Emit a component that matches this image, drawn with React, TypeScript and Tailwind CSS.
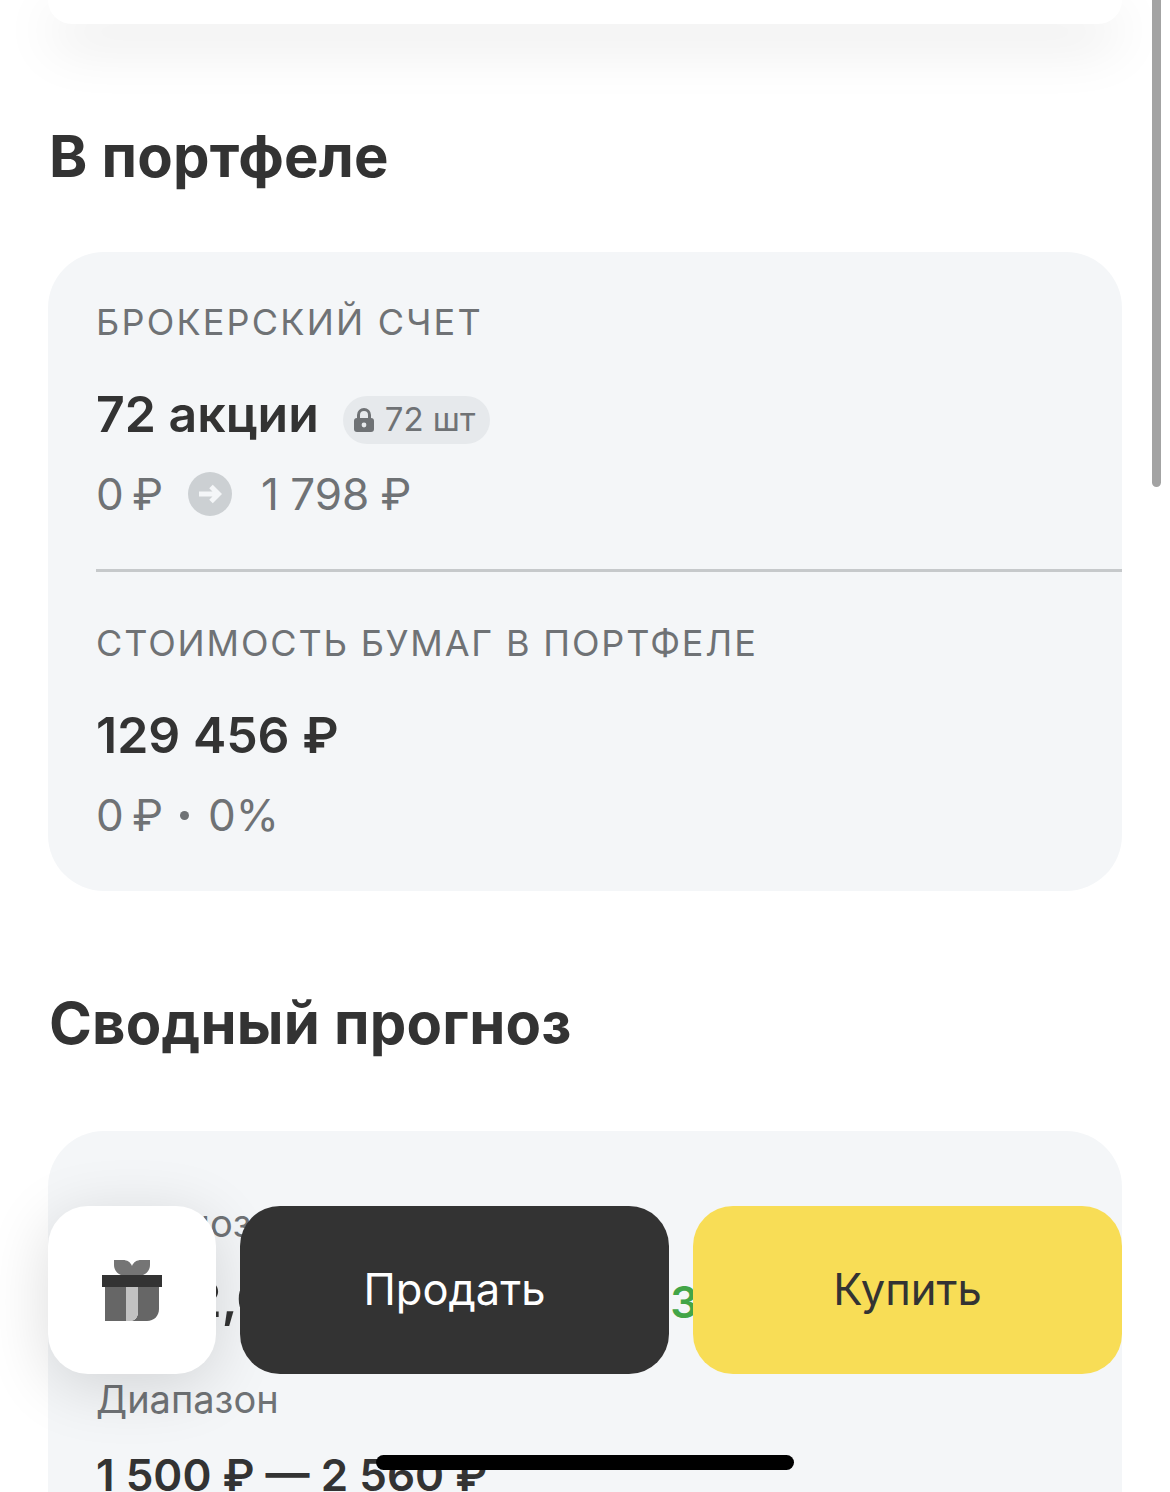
import React from "react";

function Gift() {
  return (
    <svg width="60" height="61" viewBox="0 0 60 61">
      <path d="M12 0H21C25 0 28.5 2 30 6C31.5 2 35 0 39 0H48V5C48 11 43 16 36 16H24C17 16 12 11 12 5Z" fill="#757575" />
      <rect x="0" y="15" width="60" height="12" fill="#333333" />
      <rect x="3" y="27" width="21" height="34" fill="#666666" />
      <path d="M36 27H57V49C57 56 52 61 45 61H28C33 61 36 57 36 52Z" fill="#666666" />
      <path d="M24 27H36V52C36 57 33 61 28 61H24Z" fill="#c2c2c2" />
    </svg>
  );
}

function Lock() {
  return (
    <svg width="22" height="25" viewBox="0 0 22 25">
      <path d="M5.5 10V7a5.5 5.5 0 0 1 11 0v3" fill="none" stroke="#6f7275" strokeWidth="3" />
      <rect x="1" y="10" width="20" height="14" rx="3" fill="#6f7275" />
      <circle cx="11" cy="17" r="2.4" fill="#e6e9ec" />
    </svg>
  );
}

function ArrowBadge() {
  return (
    <span className="flex h-[44px] w-[44px] items-center justify-center rounded-full bg-[#ccd0d3]">
      <svg width="24" height="22" viewBox="0 0 24 22">
        <path d="M1 11H20M13 3.5L20.5 11L13 18.5" fill="none" stroke="#f4f6f8" strokeWidth="5" />
      </svg>
    </span>
  );
}

export default function App() {
  return (
    <div
      className="relative h-[1492px] w-[1170px] overflow-hidden bg-white text-[#333333]"
      style={{ fontFamily: "Inter, 'Liberation Sans', sans-serif" }}
    >
      <div className="absolute right-[9px] top-0 h-[487px] w-[9px] rounded-b-full bg-[#a3a3a3]" />

      <div className="px-12">
        <div className="h-6 rounded-b-[24px] bg-white shadow-[0_20px_56px_rgba(0,0,0,0.12)]" />

        <h2 className="ml-[1px] mt-[96px] text-[58px] font-bold leading-[72px] tracking-[0.2px]">В портфеле</h2>

        <section className="mt-[60px] h-[639px] rounded-[56px] bg-[#f4f6f8] pl-12 pt-[48px]">
          <div className="text-[36px] uppercase leading-[44px] tracking-[2.2px] text-[#6f7275]">Брокерский счет</div>
          <div className="mt-[38px] flex items-center gap-[24px]">
            <span className="text-[50px] font-semibold leading-[64px]">72 акции</span>
            <span className="mt-[12px] flex h-[48px] items-center gap-[10px] rounded-full bg-[#e6e9ec] pl-[10px] pr-[15px] text-[33px] text-[#6f7275]">
              <Lock />
              72 шт
            </span>
          </div>
          <div className="mt-[20px] flex h-[56px] items-center text-[44px] text-[#6f7275]">
            <span className="[word-spacing:-4px]">0 ₽</span>
            <span className="ml-[25px]"><ArrowBadge /></span>
            <span className="ml-[29px] [word-spacing:-1px]">1 798 ₽</span>
          </div>
          <div className="mt-[47px] h-[3px] bg-[#c6c9cb]" />
          <div className="mt-[49px] text-[36px] uppercase leading-[44px] tracking-[1.85px] text-[#6f7275]">Стоимость бумаг в портфеле</div>
          <div className="mt-[38px] text-[50px] font-semibold leading-[64px]">129 456 ₽</div>
          <div className="mt-[20px] flex h-[56px] items-center text-[44px] text-[#6f7275]">
            <span className="[word-spacing:-4px]">0 ₽</span>
            <span className="ml-[17px] h-[9px] w-[9px] rounded-full bg-[#6f7275]" />
            <span className="ml-[19px]">0%</span>
          </div>
        </section>

        <h2 className="ml-[1px] mt-[96px] text-[58px] font-bold leading-[72px] tracking-[0.2px]">Сводный прогноз</h2>

        <section className="mt-[72px] h-[500px] rounded-[56px] bg-[#f4f6f8] pl-12 pt-[70px]">
          <div className="text-[38px] leading-[44px] text-[#6f7275]">Прогноз</div>
          <div className="mt-[22px] flex h-[64px] items-center">
            <span className="w-[272px] shrink-0 text-[50px] font-semibold">1 872,05 ₽</span>
            <span className="ml-[273px] mt-[6px] text-[44px] font-semibold text-[#42a547]">+372,05 ₽</span>
          </div>
          <div className="mt-[46px] text-[38px] leading-[44px] text-[#6f7275]">Диапазон</div>
          <div className="mt-[22px] text-[44px] font-semibold leading-[64px]">1 500 ₽ — 2 560 ₽</div>
        </section>
      </div>

      <div className="absolute left-12 top-[1206px] flex h-[168px] w-[1074px] gap-6">
        <div className="flex w-[168px] shrink-0 items-center justify-center rounded-[40px] bg-white shadow-[0_12px_64px_rgba(0,0,0,0.14)]">
          <Gift />
        </div>
        <button className="w-[429px] rounded-[40px] bg-[#333333] text-[43.5px] text-white">Продать</button>
        <button className="w-[429px] rounded-[40px] bg-[#f8dd56] text-[43.5px] text-[#333333]">Купить</button>
      </div>

      <div className="absolute left-[376px] top-[1455px] h-[15px] w-[418px] rounded-full bg-black" />
    </div>
  );
}
